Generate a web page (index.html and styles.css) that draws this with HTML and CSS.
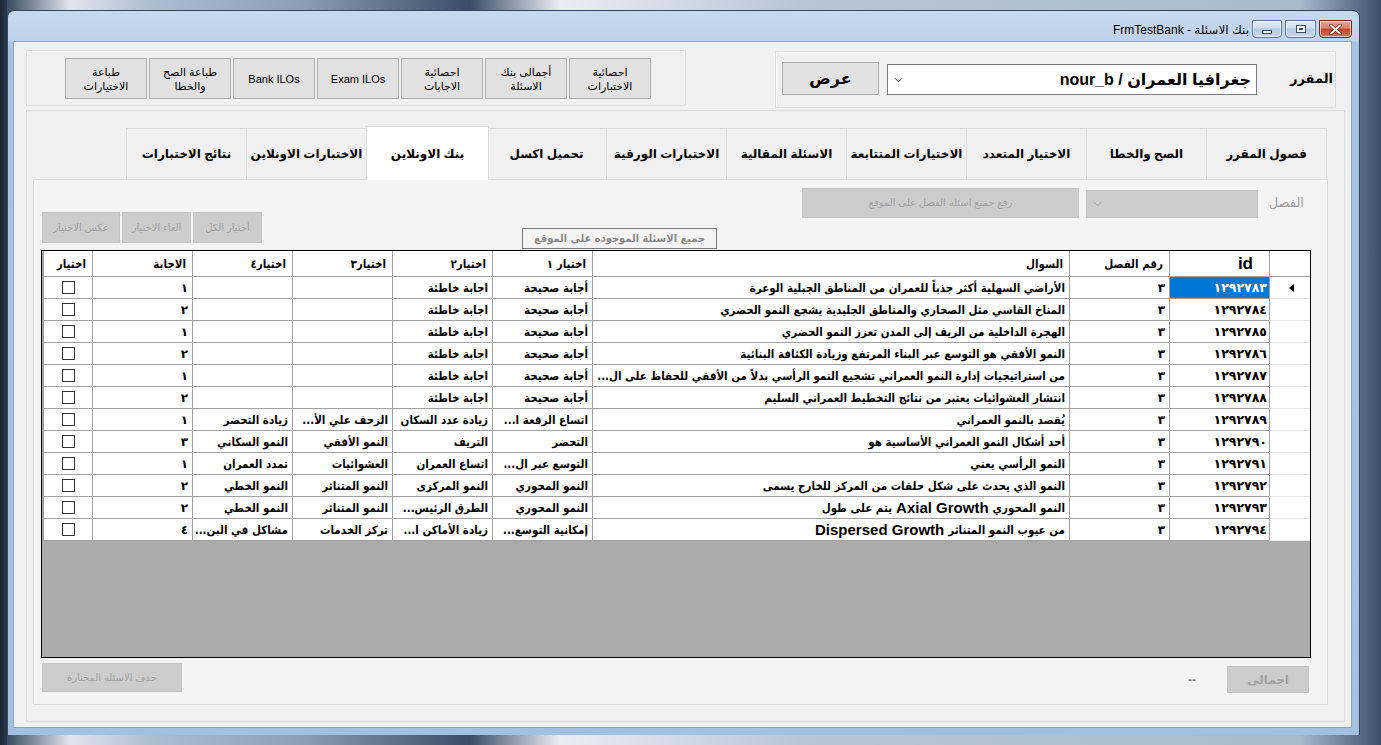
FILE: index.html
```html
<!DOCTYPE html>
<html lang="ar">
<head>
<meta charset="utf-8">
<title>FrmTestBank</title>
<link rel="stylesheet" href="styles.css">
</head>
<body>
<div class="desktop">
  <div class="window">
    <div class="titlebar">
      <div class="title">FrmTestBank - بنك الاسئلة</div>
      <div class="winbtns">
        <span class="wb wb-min"><span class="ico-min"></span></span>
        <span class="wb wb-max"><span class="ico-max"></span></span>
        <span class="wb wb-close">
          <svg width="13" height="11" viewBox="0 0 13 11"><path d="M2 1.5 L11 9.5 M11 1.5 L2 9.5" stroke="#5a1a10" stroke-width="3.4" stroke-linecap="round"/><path d="M2 1.5 L11 9.5 M11 1.5 L2 9.5" stroke="#fff" stroke-width="2" stroke-linecap="round"/></svg>
        </span>
      </div>
    </div>
    <div class="client">
      <div class="toprow">
        <div class="group gbuttons">
          <div class="btn">طباعة<br>الاختيارات</div>
          <div class="btn">طباعة الصح<br>والخطا</div>
          <div class="btn">Bank ILOs</div>
          <div class="btn">Exam ILOs</div>
          <div class="btn">احصائية<br>الاجابات</div>
          <div class="btn">أجمالى بنك<br>الاسئلة</div>
          <div class="btn">احصائية<br>الاختبارات</div>
        </div>
        <div class="group gcourse">
          <div class="btn btn-show">عرض</div>
          <div class="combo">
            <svg class="chev" width="9" height="6" viewBox="0 0 9 6"><path d="M0.5 0.8 L4.5 4.8 L8.5 0.8" fill="none" stroke="#555" stroke-width="1"/></svg>
            <span class="combo-text">جغرافيا العمران / nour_b</span>
          </div>
          <div class="lbl-course">المقرر</div>
        </div>
      </div>

      <div class="panel">
        <div class="tabs">
          <div class="tab">فصول المقرر</div>
          <div class="tab">الصح والخطا</div>
          <div class="tab">الاختيار المتعدد</div>
          <div class="tab">الاختيارات المتتابعة</div>
          <div class="tab">الاسئلة المقالية</div>
          <div class="tab">الاختبارات الورقية</div>
          <div class="tab">تحميل اكسل</div>
          <div class="tab tab-sel">بنك الاونلاين</div>
          <div class="tab">الاختبارات الاونلاين</div>
          <div class="tab">نتائج الاختبارات</div>
        </div>
        <div class="page">
          <div class="row-a">
            <div class="dbtn dbtn-upload">رفع جميع اسئلة الفصل على الموقع</div>
            <div class="dcombo">
              <svg class="chev" width="9" height="6" viewBox="0 0 9 6"><path d="M0.5 0.8 L4.5 4.8 L8.5 0.8" fill="none" stroke="#a8a8a8" stroke-width="1"/></svg>
            </div>
            <div class="lbl-chapter">الفصل</div>
          </div>
          <div class="row-b">
            <div class="dbtn dbtn-inv">عكس الاختيار</div>
            <div class="dbtn dbtn-sm">الغاء الاختيار</div>
            <div class="dbtn dbtn-sm">أختيار الكل</div>
            <div class="lbl-all">جميع الاسئلة الموجوده على الموقع</div>
          </div>

          <div class="grid">
            <div class="grow ghead">
              <div class="c"></div>
              <div class="c c-id">id</div>
              <div class="c">رقم الفصل</div>
              <div class="c">السوال</div>
              <div class="c">اختيار ١</div>
              <div class="c">اختيار٢</div>
              <div class="c">اختيار٣</div>
              <div class="c">اختيار٤</div>
              <div class="c">الاجابة</div>
              <div class="c">اختيار</div>
            </div>

            <div class="grow">
              <div class="c rh"><span class="tri"></span></div>
              <div class="c num sel">١٢٩٢٧٨٣</div>
              <div class="c d">٣</div>
              <div class="c">الأراضي السهلية أكثر جذباً للعمران من المناطق الجبلية الوعرة</div>
              <div class="c">أجابة صحيحة</div>
              <div class="c">اجابة خاطئة</div>
              <div class="c"></div>
              <div class="c"></div>
              <div class="c d">١</div>
              <div class="c cb"><span class="box"></span></div>
            </div>
            <div class="grow">
              <div class="c rh"></div>
              <div class="c num">١٢٩٢٧٨٤</div>
              <div class="c d">٣</div>
              <div class="c">المناخ القاسي مثل الصحاري والمناطق الجليدية يشجع النمو الحضري</div>
              <div class="c">أجابة صحيحة</div>
              <div class="c">اجابة خاطئة</div>
              <div class="c"></div>
              <div class="c"></div>
              <div class="c d">٢</div>
              <div class="c cb"><span class="box"></span></div>
            </div>
            <div class="grow">
              <div class="c rh"></div>
              <div class="c num">١٢٩٢٧٨٥</div>
              <div class="c d">٣</div>
              <div class="c">الهجرة الداخلية من الريف إلى المدن تعزز النمو الحضري</div>
              <div class="c">أجابة صحيحة</div>
              <div class="c">اجابة خاطئة</div>
              <div class="c"></div>
              <div class="c"></div>
              <div class="c d">١</div>
              <div class="c cb"><span class="box"></span></div>
            </div>
            <div class="grow">
              <div class="c rh"></div>
              <div class="c num">١٢٩٢٧٨٦</div>
              <div class="c d">٣</div>
              <div class="c">النمو الأفقي هو التوسع عبر البناء المرتفع وزيادة الكثافة البنائية</div>
              <div class="c">أجابة صحيحة</div>
              <div class="c">اجابة خاطئة</div>
              <div class="c"></div>
              <div class="c"></div>
              <div class="c d">٢</div>
              <div class="c cb"><span class="box"></span></div>
            </div>
            <div class="grow">
              <div class="c rh"></div>
              <div class="c num">١٢٩٢٧٨٧</div>
              <div class="c d">٣</div>
              <div class="c">من استراتيجيات إدارة النمو العمراني تشجيع النمو الرأسي بدلاً من الأفقي للحفاظ على ال...</div>
              <div class="c">أجابة صحيحة</div>
              <div class="c">اجابة خاطئة</div>
              <div class="c"></div>
              <div class="c"></div>
              <div class="c d">١</div>
              <div class="c cb"><span class="box"></span></div>
            </div>
            <div class="grow">
              <div class="c rh"></div>
              <div class="c num">١٢٩٢٧٨٨</div>
              <div class="c d">٣</div>
              <div class="c">انتشار العشوائيات يعتبر من نتائج التخطيط العمراني السليم</div>
              <div class="c">أجابة صحيحة</div>
              <div class="c">اجابة خاطئة</div>
              <div class="c"></div>
              <div class="c"></div>
              <div class="c d">٢</div>
              <div class="c cb"><span class="box"></span></div>
            </div>
            <div class="grow">
              <div class="c rh"></div>
              <div class="c num">١٢٩٢٧٨٩</div>
              <div class="c d">٣</div>
              <div class="c">يُقصد بالنمو العمراني</div>
              <div class="c">اتساع الرقعة ا...</div>
              <div class="c">زيادة عدد السكان</div>
              <div class="c">الزحف علي الأ...</div>
              <div class="c">زيادة التحضر</div>
              <div class="c d">١</div>
              <div class="c cb"><span class="box"></span></div>
            </div>
            <div class="grow">
              <div class="c rh"></div>
              <div class="c num">١٢٩٢٧٩٠</div>
              <div class="c d">٣</div>
              <div class="c">أحد أشكال النمو العمراني الأساسية هو</div>
              <div class="c">التحضر</div>
              <div class="c">التريف</div>
              <div class="c">النمو الأفقي</div>
              <div class="c">النمو السكاني</div>
              <div class="c d">٣</div>
              <div class="c cb"><span class="box"></span></div>
            </div>
            <div class="grow">
              <div class="c rh"></div>
              <div class="c num">١٢٩٢٧٩١</div>
              <div class="c d">٣</div>
              <div class="c">النمو الرأسي يعني</div>
              <div class="c">التوسع عبر ال...</div>
              <div class="c">اتساع العمران</div>
              <div class="c">العشوائيات</div>
              <div class="c">تمدد العمران</div>
              <div class="c d">١</div>
              <div class="c cb"><span class="box"></span></div>
            </div>
            <div class="grow">
              <div class="c rh"></div>
              <div class="c num">١٢٩٢٧٩٢</div>
              <div class="c d">٣</div>
              <div class="c">النمو الذي يحدث على شكل حلقات من المركز للخارج يسمى</div>
              <div class="c">النمو المحوري</div>
              <div class="c">النمو المركزى</div>
              <div class="c">النمو المتناثر</div>
              <div class="c">النمو الخطي</div>
              <div class="c d">٢</div>
              <div class="c cb"><span class="box"></span></div>
            </div>
            <div class="grow">
              <div class="c rh"></div>
              <div class="c num">١٢٩٢٧٩٣</div>
              <div class="c d">٣</div>
              <div class="c">النمو المحوري <span class="lat">Axial Growth</span> يتم على طول</div>
              <div class="c">النمو المحوري</div>
              <div class="c">الطرق الرئيس...</div>
              <div class="c">النمو المتناثر</div>
              <div class="c">النمو الخطي</div>
              <div class="c d">٢</div>
              <div class="c cb"><span class="box"></span></div>
            </div>
            <div class="grow">
              <div class="c rh"></div>
              <div class="c num">١٢٩٢٧٩٤</div>
              <div class="c d">٣</div>
              <div class="c">من عيوب النمو المتناثر <span class="lat">Dispersed Growth</span></div>
              <div class="c">إمكانية التوسع...</div>
              <div class="c">زيادة الأماكن ا...</div>
              <div class="c">تركز الخدمات</div>
              <div class="c">مشاكل في البن...</div>
              <div class="c d">٤</div>
              <div class="c cb"><span class="box"></span></div>
            </div>
          </div>

          <div class="row-bottom">
            <div class="dbtn dbtn-del">حذف الاسئلة المختارة</div>
            <div class="bottom-right">
              <div class="lbl-dash">--</div>
              <div class="dbtn dbtn-total">اجمالى</div>
            </div>
          </div>
        </div>
      </div>
    </div>
  </div>
</div>
</body>
</html>
```

FILE: styles.css
```css
* { box-sizing: border-box; }
html, body { margin: 0; padding: 0; }
body {
  width: 1381px;
  height: 745px;
  overflow: hidden;
  font-family: "Liberation Sans", "DejaVu Sans", sans-serif;
  background: #4a5b70;
}
.desktop {
  width: 1381px;
  height: 745px;
  padding: 10px 0 0 7px;
  background:
    linear-gradient(90deg, #1c2736 0, #2b3a4f 7px, transparent 7px),
    linear-gradient(90deg, #2a3a52 0, #dfe6ef 70px, #aebdd0 150px, #8d9eb5 300px, #3c4c66 470px, #e9eef5 560px, #b7c5d6 800px, #aab9cc 1300px, #3e4f6c 1381px);
}
.window {
  width: 1353px;
  height: 725px;
  border: 1px solid #34455c;
  border-bottom: none;
  border-radius: 7px 7px 0 0;
  background: linear-gradient(180deg, #c7d9ee 0, #bdd2ea 30px, #a9c4e3 31px, #a4c0e0 100%);
  padding: 0 7px 7px 5px;
  display: flex;
  flex-direction: column;
}
.titlebar {
  height: 30px;
  display: flex;
  justify-content: flex-end;
  align-items: flex-start;
  padding-top: 9px;
}
.title {
  font-size: 12px;
  color: #000;
  line-height: 16px;
  margin-top: 2px;
  margin-right: 3px;
}
.winbtns { display: flex; gap: 3px; }
.wb {
  height: 18px;
  border: 1px solid #5f7594;
  border-radius: 0 0 4px 4px;
  display: flex;
  align-items: center;
  justify-content: center;
  background: linear-gradient(180deg, #e4edf7 0, #cddcee 45%, #b3c8e2 50%, #c8d9ee 100%);
  box-shadow: inset 0 0 0 1px rgba(255,255,255,0.6);
}
.wb-min { width: 30px; }
.wb-max { width: 31px; }
.wb-close {
  width: 33px;
  border-color: #6b2a20;
  background: linear-gradient(180deg, #e7a79c 0, #d8806f 45%, #c4432c 50%, #d4715a 100%);
}
.ico-min {
  display: block;
  width: 10px;
  height: 4px;
  margin-top: 5px;
  background: #fff;
  border: 1px solid #3d4d66;
}
.ico-max {
  display: block;
  width: 10px;
  height: 8px;
  border: 1px solid #3d4d66;
  box-shadow: inset 0 0 0 2px #fff, inset 0 0 0 3px #3d4d66;
  background: #dfe8f3;
}

.client {
  flex: 1;
  background: #f0f0f0;
  border: 1px solid #8fa3bc;
  display: flex;
  flex-direction: column;
  padding: 0;
}

/* top row */
.toprow {
  display: flex;
  justify-content: space-between;
  align-items: flex-start;
  padding: 8px 15px 0 12px;
  height: 68px;
}
.group {
  border: 1px solid #dcdcdc;
  box-shadow: inset 1px 1px 0 #fff;
}
.gbuttons {
  width: 660px;
  height: 56px;
  display: flex;
  gap: 2px;
  padding: 7px 0 0 38px;
}
.btn {
  background: #e1e1e1;
  border: 1px solid #adadad;
  color: #000;
  font-size: 11px;
  line-height: 14px;
  text-align: center;
  display: flex;
  align-items: center;
  justify-content: center;
}
.gbuttons .btn { width: 82px; height: 41px; }
.gcourse {
  width: 561px;
  height: 57px;
  margin-top: 1px;
  display: flex;
  align-items: flex-start;
  padding: 10px 0 0 6px;
}
.btn-show {
  width: 97px;
  height: 33px;
  font-size: 16px;
  font-weight: bold;
}
.combo {
  width: 370px;
  height: 31px;
  margin: 2px 0 0 8px;
  background: #fff;
  border: 1px solid #7a7a7a;
  display: flex;
  align-items: center;
  justify-content: space-between;
  padding: 0 5px 0 6px;
}
.combo-text {
  direction: rtl;
  font-size: 16px;
  font-weight: bold;
  color: #000;
  white-space: nowrap;
}
.lbl-course {
  direction: rtl;
  font-size: 13px;
  font-weight: bold;
  margin: 9px 0 0 auto;
  padding-right: 2px;
}

/* panel & tabs */
.panel {
  margin: 0 6px 0 12px;
  height: 612px;
  border: 1px solid #dcdcdc;
  padding: 15px 16px 0 6px;
}
.tabs {
  direction: rtl;
  display: flex;
  align-items: flex-end;
  height: 53px;
  padding-right: 1px;
}
.tab {
  width: 121px;
  height: 51px;
  margin-left: -1px;
  border: 1px solid #dcdcdc;
  border-bottom: none;
  background: #f0f0f0;
  font-size: 12px;
  font-weight: bold;
  color: #000;
  display: flex;
  align-items: center;
  justify-content: center;
  white-space: nowrap;
}
.tab-sel {
  height: 54px;
  width: 123px;
  margin-right: -2px;
  margin-bottom: -1px;
  background: #fff;
  position: relative;
  z-index: 1;
}
.page {
  height: 526px;
  border: 1px solid #dcdcdc;
  background: #f4f4f4;
  padding: 7px 17px 0 7px;
}
.dbtn {
  background: #cccccc;
  border: 1px solid #c4c4c4;
  color: #a3a3a3;
  font-size: 10px;
  display: flex;
  align-items: center;
  justify-content: center;
  white-space: nowrap;
  direction: rtl;
}
.row-a {
  display: flex;
  justify-content: flex-end;
  align-items: center;
  height: 31px;
}
.dbtn-upload { width: 277px; height: 30px; }
.dcombo {
  width: 172px;
  height: 28px;
  margin-left: 7px;
  margin-top: 2px;
  background: #cccccc;
  border: 1px solid #c4c4c4;
  display: flex;
  align-items: center;
  padding-left: 6px;
}
.lbl-chapter {
  direction: rtl;
  font-size: 13px;
  color: #9d9d9d;
  margin: 0 6px 0 11px;
  width: 35px;
  text-align: right;
}
.row-b {
  display: flex;
  height: 37px;
  margin-top: -6px;
  align-items: flex-start;
}
.dbtn-inv { width: 78px; height: 31px; margin-left: 1px; }
.dbtn-sm { width: 69px; height: 31px; margin-left: 2px; }
.lbl-all {
  align-self: flex-end;
  margin-left: 260px;
  width: 195px;
  height: 21px;
  border: 1px solid #7a7a7a;
  color: #8a8a8a;
  font-family: "DejaVu Sans Condensed", "DejaVu Sans", sans-serif;
  font-size: 11px;
  font-weight: bold;
  direction: rtl;
  text-align: center;
  line-height: 19px;
  white-space: nowrap;
  overflow: hidden;
}

/* grid */
.grid {
  margin-top: 1px;
  width: 1270px;
  height: 408px;
  border: 1px solid #000;
  background: #ababab;
  direction: rtl;
}
.grow {
  display: grid;
  grid-template-columns: 41px 100px 100px 477px 100px 100px 100px 100px 100px 49px;
  height: 22px;
}
.ghead { height: 26px; }
.c {
  border-left: 1px solid #a0a0a0;
  border-bottom: 1px solid #a0a0a0;
  background: #fff;
  font-family: "DejaVu Sans Condensed", "DejaVu Sans", sans-serif;
  font-size: 11.5px;
  font-weight: bold;
  color: #000;
  white-space: nowrap;
  overflow: hidden;
  padding: 0 4px 0 2px;
  display: flex;
  align-items: center;
  justify-content: flex-start;
}
.ghead .c { padding-right: 6px; }
.ghead .c-id { font-family: "Liberation Sans", sans-serif; font-size: 17px; padding-right: 16px; }
.c.rh { border-bottom-color: #e6e6e6; justify-content: center; }
.ghead .c.rh { border-bottom-color: #a0a0a0; }
.d { font-family: "DejaVu Sans", sans-serif; font-size: 12px; }
.num {
  font-family: "DejaVu Sans", sans-serif;
  font-size: 12.5px;
  letter-spacing: 2px;
  padding-right: 2px;
}
.sel { background: #0078d7; color: #fff; }
.tri {
  width: 0;
  height: 0;
  border-top: 4px solid transparent;
  border-bottom: 4px solid transparent;
  border-right: 5px solid #000;
  margin-left: 4px;
}
.cb { justify-content: center; padding: 0; }
.box {
  width: 13px;
  height: 13px;
  border: 1px solid #333;
  background: #fff;
}
.lat { font-family: "Liberation Sans", sans-serif; font-size: 15px; margin: 0 4px; }

/* bottom */
.row-bottom {
  margin-top: 5px;
  display: flex;
  justify-content: space-between;
  align-items: flex-start;
}
.dbtn-del { width: 140px; height: 29px; margin-left: 1px; }
.bottom-right { display: flex; align-items: center; margin-top: 3px; }
.lbl-dash {
  color: #777;
  font-weight: bold;
  font-size: 12px;
  margin-right: 31px;
}
.dbtn-total { width: 82px; height: 27px; font-size: 12px; font-weight: bold; margin-right: 1px; }
```
